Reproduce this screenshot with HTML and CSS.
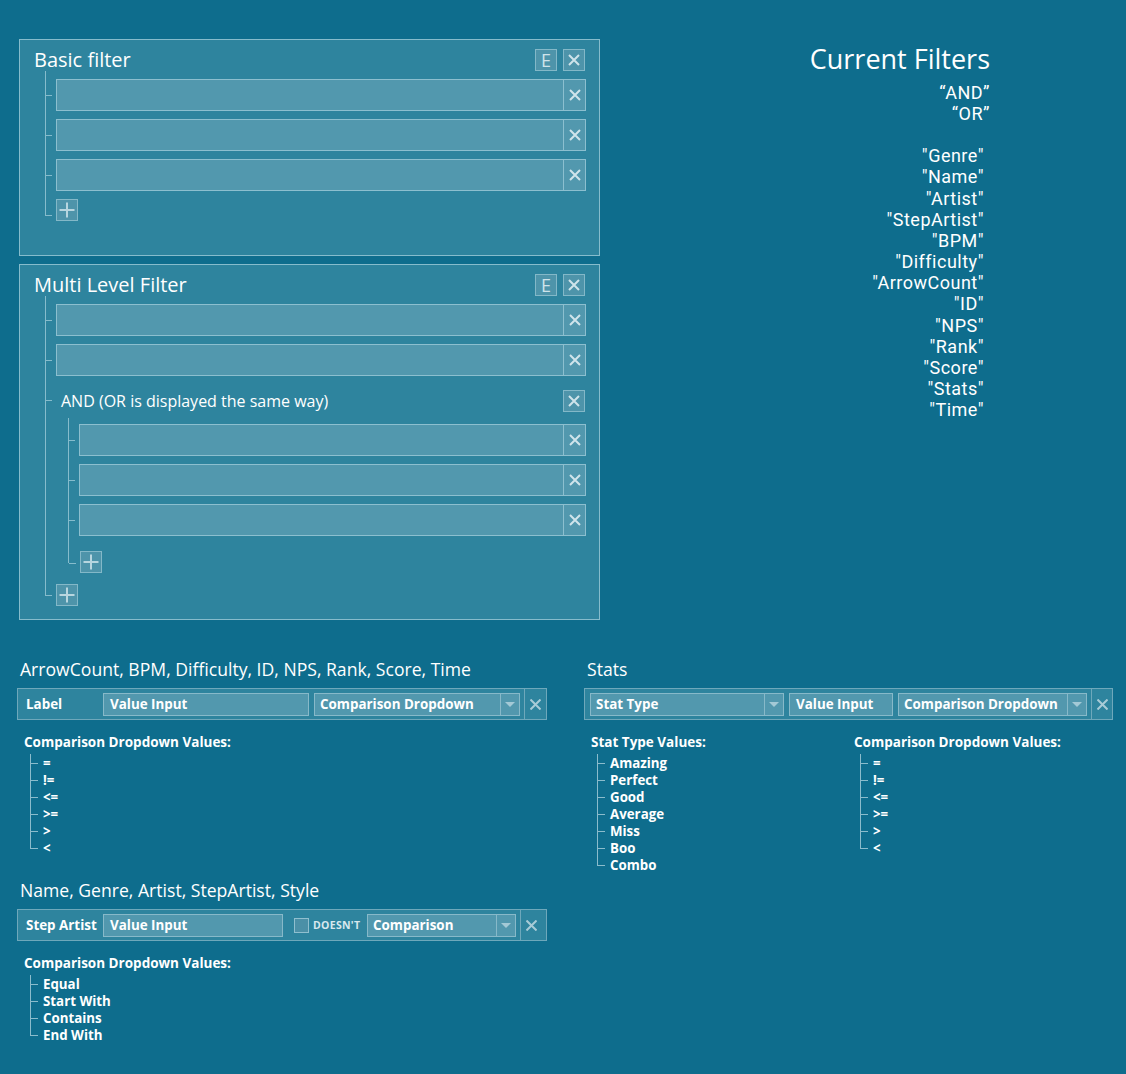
FILE: index.html
```html
<!DOCTYPE html>
<html lang="en">
<head>
<meta charset="utf-8">
<title>Filters</title>
<link rel="stylesheet" href="styles.css">
</head>
<body>
<main class="page">
  <div class="top">
    <div class="panels">
      <section class="panel panel-basic">
        <div class="panel-head">
          <h2 class="panel-title">Basic filter</h2>
          <div class="head-btns">
            <span class="btn btn-e">E</span>
            <span class="btn btn-x"><svg class="ico-x" viewBox="0 0 12 12"><path d="M1 1L11 11M11 1L1 11"/></svg></span>
          </div>
        </div>
        <div class="tree tree-basic">
          <div class="node node-row"><div class="frow"><div class="frow-field"></div><div class="frow-x"><svg class="ico-x" viewBox="0 0 12 12"><path d="M1 1L11 11M11 1L1 11"/></svg></div></div></div>
          <div class="node node-row"><div class="frow"><div class="frow-field"></div><div class="frow-x"><svg class="ico-x" viewBox="0 0 12 12"><path d="M1 1L11 11M11 1L1 11"/></svg></div></div></div>
          <div class="node node-row"><div class="frow"><div class="frow-field"></div><div class="frow-x"><svg class="ico-x" viewBox="0 0 12 12"><path d="M1 1L11 11M11 1L1 11"/></svg></div></div></div>
          <div class="node node-plus node-plus-basic"><span class="btn btn-plus"><svg class="ico-plus" viewBox="0 0 16 16"><path d="M8 0.5V15.5M0.5 8H15.5"/></svg></span></div>
        </div>
      </section>

      <section class="panel panel-multi">
        <div class="panel-head">
          <h2 class="panel-title">Multi Level Filter</h2>
          <div class="head-btns">
            <span class="btn btn-e">E</span>
            <span class="btn btn-x"><svg class="ico-x" viewBox="0 0 12 12"><path d="M1 1L11 11M11 1L1 11"/></svg></span>
          </div>
        </div>
        <div class="tree tree-multi">
          <div class="node node-row"><div class="frow"><div class="frow-field"></div><div class="frow-x"><svg class="ico-x" viewBox="0 0 12 12"><path d="M1 1L11 11M11 1L1 11"/></svg></div></div></div>
          <div class="node node-row"><div class="frow"><div class="frow-field"></div><div class="frow-x"><svg class="ico-x" viewBox="0 0 12 12"><path d="M1 1L11 11M11 1L1 11"/></svg></div></div></div>
          <div class="node node-group">
            <div class="group-head">
              <span class="group-label">AND (OR is displayed the same way)</span>
              <span class="btn btn-x"><svg class="ico-x" viewBox="0 0 12 12"><path d="M1 1L11 11M11 1L1 11"/></svg></span>
            </div>
            <div class="tree tree-sub">
              <div class="node node-row"><div class="frow"><div class="frow-field"></div><div class="frow-x"><svg class="ico-x" viewBox="0 0 12 12"><path d="M1 1L11 11M11 1L1 11"/></svg></div></div></div>
              <div class="node node-row"><div class="frow"><div class="frow-field"></div><div class="frow-x"><svg class="ico-x" viewBox="0 0 12 12"><path d="M1 1L11 11M11 1L1 11"/></svg></div></div></div>
              <div class="node node-row"><div class="frow"><div class="frow-field"></div><div class="frow-x"><svg class="ico-x" viewBox="0 0 12 12"><path d="M1 1L11 11M11 1L1 11"/></svg></div></div></div>
              <div class="node node-plus node-plus-sub"><span class="btn btn-plus"><svg class="ico-plus" viewBox="0 0 16 16"><path d="M8 0.5V15.5M0.5 8H15.5"/></svg></span></div>
            </div>
          </div>
          <div class="node node-plus node-plus-outer"><span class="btn btn-plus"><svg class="ico-plus" viewBox="0 0 16 16"><path d="M8 0.5V15.5M0.5 8H15.5"/></svg></span></div>
        </div>
      </section>
    </div>

    <aside class="current">
      <h1 class="current-title">Current Filters</h1>
      <ul class="current-list">
        <li>“AND”</li>
        <li>“OR”</li>
        <li class="cur-gap"></li>
        <li class="cur-q">"Genre"</li>
        <li class="cur-q">"Name"</li>
        <li class="cur-q">"Artist"</li>
        <li class="cur-q">"StepArtist"</li>
        <li class="cur-q">"BPM"</li>
        <li class="cur-q">"Difficulty"</li>
        <li class="cur-q">"ArrowCount"</li>
        <li class="cur-q">"ID"</li>
        <li class="cur-q">"NPS"</li>
        <li class="cur-q">"Rank"</li>
        <li class="cur-q">"Score"</li>
        <li class="cur-q">"Stats"</li>
        <li class="cur-q">"Time"</li>
      </ul>
    </aside>
  </div>

  <div class="bottom">
    <div class="col col-left">
      <section class="fsec">
        <h3 class="fsec-title">ArrowCount, BPM, Difficulty, ID, NPS, Rank, Score, Time</h3>
        <div class="fbox">
          <span class="fbox-label">Label</span>
          <span class="fld fld-num">Value Input</span>
          <span class="dd dd-num"><span class="dd-text">Comparison Dropdown</span><span class="dd-arrow"><svg class="ico-arrow" viewBox="0 0 10 5"><path d="M0 0H10L5 5Z"/></svg></span></span>
          <span class="fbox-x"><svg class="ico-x2" viewBox="0 0 11 11"><path d="M0.5 0.5L10.5 10.5M10.5 0.5L0.5 10.5"/></svg></span>
        </div>
        <div class="lists">
          <div class="vlist">
            <div class="vlist-head">Comparison Dropdown Values:</div>
            <ul class="vtree">
              <li>=</li><li>!=</li><li>&lt;=</li><li>&gt;=</li><li>&gt;</li><li>&lt;</li>
            </ul>
          </div>
        </div>
      </section>

      <section class="fsec fsec-name">
        <h3 class="fsec-title">Name, Genre, Artist, StepArtist, Style</h3>
        <div class="fbox">
          <span class="fbox-label">Step Artist</span>
          <span class="fld fld-name">Value Input</span>
          <span class="chk"></span>
          <span class="doesnt">DOESN'T</span>
          <span class="dd dd-name"><span class="dd-text">Comparison</span><span class="dd-arrow"><svg class="ico-arrow" viewBox="0 0 10 5"><path d="M0 0H10L5 5Z"/></svg></span></span>
          <span class="fbox-x"><svg class="ico-x2" viewBox="0 0 11 11"><path d="M0.5 0.5L10.5 10.5M10.5 0.5L0.5 10.5"/></svg></span>
        </div>
        <div class="lists">
          <div class="vlist">
            <div class="vlist-head">Comparison Dropdown Values:</div>
            <ul class="vtree">
              <li>Equal</li><li>Start With</li><li>Contains</li><li>End With</li>
            </ul>
          </div>
        </div>
      </section>
    </div>

    <div class="col col-right">
      <section class="fsec">
        <h3 class="fsec-title">Stats</h3>
        <div class="fbox fbox-stats">
          <span class="dd dd-stat"><span class="dd-text">Stat Type</span><span class="dd-arrow"><svg class="ico-arrow" viewBox="0 0 10 5"><path d="M0 0H10L5 5Z"/></svg></span></span>
          <span class="fld fld-stat">Value Input</span>
          <span class="dd dd-statcmp"><span class="dd-text">Comparison Dropdown</span><span class="dd-arrow"><svg class="ico-arrow" viewBox="0 0 10 5"><path d="M0 0H10L5 5Z"/></svg></span></span>
          <span class="fbox-x fbox-x-stats"><svg class="ico-x2" viewBox="0 0 11 11"><path d="M0.5 0.5L10.5 10.5M10.5 0.5L0.5 10.5"/></svg></span>
        </div>
        <div class="lists">
          <div class="vlist vlist-stat">
            <div class="vlist-head">Stat Type Values:</div>
            <ul class="vtree">
              <li>Amazing</li><li>Perfect</li><li>Good</li><li>Average</li><li>Miss</li><li>Boo</li><li>Combo</li>
            </ul>
          </div>
          <div class="vlist">
            <div class="vlist-head">Comparison Dropdown Values:</div>
            <ul class="vtree">
              <li>=</li><li>!=</li><li>&lt;=</li><li>&gt;=</li><li>&gt;</li><li>&lt;</li>
            </ul>
          </div>
        </div>
      </section>
    </div>
  </div>
</main>
</body>
</html>
```

FILE: styles.css
```css
* { box-sizing: border-box; }

body {
  margin: 0;
  background: #0e6d8d;
  color: #ffffff;
  font-family: "Open Sans", "Noto Sans", sans-serif;
}

.page {
  width: 1126px;
  min-height: 1074px;
}

/* ---------- top area ---------- */
.top {
  display: flex;
  align-items: flex-start;
  padding: 39px 0 0 19px;
}

.panels {
  width: 581px;
  display: flex;
  flex-direction: column;
  gap: 8px;
}

.panel {
  background: #2e849e;
  border: 1px solid #86bccc;
  padding: 0 13px 34px 0;
}

.panel-multi { padding-bottom: 13px; }

.panel-head {
  display: flex;
  align-items: center;
  justify-content: space-between;
  height: 31px;
  padding: 9px 0 0 14px;
}

.panel-title {
  margin: 0;
  font-size: 20px;
  font-weight: 400;
  line-height: 22px;
}

.head-btns {
  display: flex;
  gap: 6px;
  margin-right: 1px;
}

.btn {
  width: 22px;
  height: 22px;
  display: flex;
  align-items: center;
  justify-content: center;
  background: #4e94aa;
  border: 1px solid #83b8c8;
  color: #cfe3ea;
}

.btn-e {
  font-size: 18px;
  line-height: 1;
  padding-bottom: 1px;
}

.ico-x {
  width: 12px;
  height: 12px;
  fill: none;
  stroke: currentColor;
  stroke-width: 2;
}

.ico-plus {
  width: 16px;
  height: 16px;
  fill: none;
  stroke: #b8d6df;
  stroke-width: 2;
}

/* tree */
.tree {
  position: relative;
  display: flex;
  flex-direction: column;
  gap: 8px;
  margin-left: 25px;
  padding: 8px 0 0 11px;
}

.tree::before {
  content: "";
  position: absolute;
  left: 0;
  top: 0;
  bottom: var(--line-end);
  width: 1px;
  background: #86bccc;
}

.tree-basic { --line-end: 5px; }
.tree-multi { --line-end: 11px; }
.tree-sub {
  --line-end: 10px;
  margin: 6px 0 0 12px;
  padding-top: 6px;
}

.node { position: relative; }

.node::after {
  content: "";
  position: absolute;
  left: -11px;
  top: var(--tick);
  width: 7px;
  height: 1px;
  background: #86bccc;
}

.node-row { --tick: 16px; }
.node-group { --tick: 10px; margin-top: 6px; }
.node-plus { --tick: 11px; }
.node-plus-basic { --tick: 16px; }
.node-plus-sub { --tick: 12px; margin: 7px 0 0 1px; }
.node-plus-outer { --tick: 11px; margin-top: 3px; }

.frow {
  display: flex;
  height: 32px;
  background: #5298ae;
  border: 1px solid #8cbfcf;
}

.frow-field { flex: 1; }

.frow-x {
  width: 22px;
  border-left: 1px solid #8cbfcf;
  display: flex;
  align-items: center;
  justify-content: center;
  color: #d0e4eb;
}

.group-head {
  display: flex;
  align-items: center;
  justify-content: space-between;
  height: 22px;
  padding-left: 5px;
}

.group-label {
  font-size: 16px;
  line-height: 22px;
}

.group-head .btn { margin-right: 1px; }

/* current filters */
.current {
  margin-left: auto;
  margin-right: 136px;
  padding-top: 2px;
  text-align: right;
}

.current-title {
  margin: 0 0 5px;
  font-size: 27px;
  font-weight: 400;
  line-height: 36px;
}

.current-list {
  list-style: none;
  margin: 0;
  padding: 0;
  font-family: Roboto, "Open Sans", sans-serif;
  font-size: 18px;
  line-height: 21.15px;
  letter-spacing: 0.5px;
}

.cur-q { padding-right: 6px; }
.cur-gap { height: 21px; }

/* ---------- bottom area ---------- */
.bottom {
  display: flex;
  gap: 37px;
  padding-left: 17px;
  margin-top: 37px;
}

.col-left { width: 530px; }
.col-right { width: 529px; }

.fsec-name { margin-top: 21px; }

.fsec-title {
  margin: 0 0 7px 3px;
  font-size: 17.6px;
  font-weight: 400;
  line-height: 24px;
  white-space: nowrap;
}

.fbox {
  display: flex;
  align-items: center;
  height: 32px;
  background: #2e849e;
  border: 1px solid #6ea8bb;
  font-size: 13.4px;
  font-weight: 700;
}

.fbox-stats { padding-left: 5px; }

.fbox-label {
  width: 85px;
  padding-left: 8px;
  white-space: nowrap;
}

.fld {
  height: 23px;
  background: #5298ae;
  border: 1px solid #87b9c9;
  line-height: 21px;
  padding-left: 6px;
  white-space: nowrap;
}

.fld-num { width: 206px; margin-right: 5px; }
.fld-name { width: 180px; }
.fld-stat { width: 104px; margin-right: 5px; }

.dd {
  display: flex;
  height: 23px;
  background: #5298ae;
  border: 1px solid #87b9c9;
  line-height: 21px;
}

.dd-num { width: 206px; }
.dd-name { width: 149px; }
.dd-stat { width: 194px; margin-right: 5px; }
.dd-statcmp { width: 189px; }

.dd-text {
  flex: 1;
  padding-left: 5px;
  white-space: nowrap;
  overflow: hidden;
}

.dd-arrow {
  width: 19px;
  border-left: 1px solid #87b9c9;
  display: flex;
  align-items: center;
  justify-content: center;
}

.ico-arrow {
  width: 10px;
  height: 5px;
  fill: #a3c9d6;
}

.fbox-x {
  width: 22px;
  height: 30px;
  margin-left: 4px;
  border-left: 1px solid #6ea8bb;
  display: flex;
  align-items: center;
  justify-content: center;
}

.fbox-x-stats { width: 21px; }

.ico-x2 {
  width: 11px;
  height: 11px;
  fill: none;
  stroke: #a8cbd7;
  stroke-width: 2;
}

.chk {
  width: 15px;
  height: 15px;
  margin-left: 11px;
  background: #4b90a7;
  border: 1px solid #8fbfcf;
}

.doesnt {
  width: 58px;
  padding-left: 4px;
  font-size: 10.5px;
  letter-spacing: 0.3px;
  color: #d8e8ee;
  white-space: nowrap;
}

/* value lists */
.lists {
  display: flex;
  padding-left: 7px;
  margin-top: 13px;
}

.vlist-stat { width: 263px; }

.vlist-head {
  font-size: 13.5px;
  font-weight: 700;
  line-height: 18px;
  white-space: nowrap;
}

.vtree {
  position: relative;
  list-style: none;
  margin: 4px 0 0 6px;
  padding: 0 0 0 13px;
  font-size: 13.3px;
  font-weight: 700;
  line-height: 17px;
}

.vtree::before {
  content: "";
  position: absolute;
  left: 0;
  top: -1px;
  bottom: 9px;
  width: 1px;
  background: #8bbccc;
}

.vtree li { position: relative; }

.vtree li::after {
  content: "";
  position: absolute;
  left: -13px;
  top: 8px;
  width: 8px;
  height: 1px;
  background: #8bbccc;
}
```
